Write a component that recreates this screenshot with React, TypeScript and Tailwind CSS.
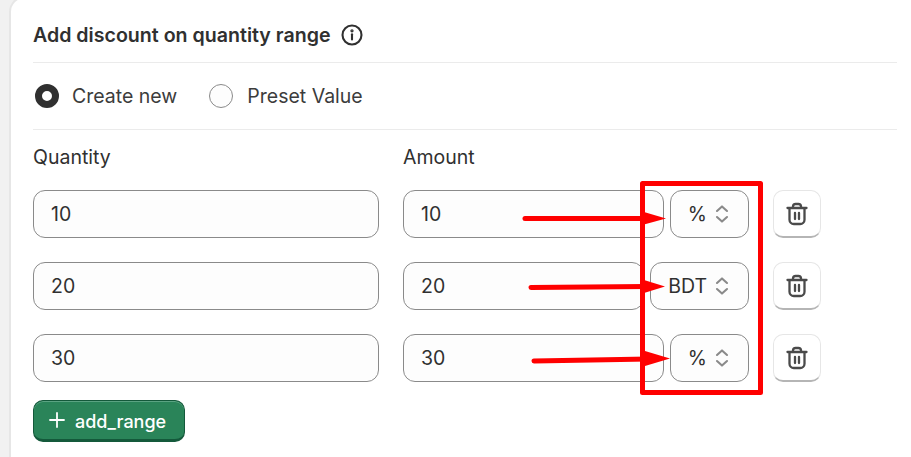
import React from "react";

function Chevrons() {
  return (
    <svg width="14" height="20" viewBox="0 0 14 20" fill="none" stroke="#8a8a8a" strokeWidth="2.100" strokeLinecap="round" strokeLinejoin="round" className="shrink-0">
      <path d="M2 7 7 2.400 12 7" />
      <path d="M2 13 7 17.600 12 13" />
    </svg>
  );
}

function Trash() {
  return (
    <svg width="22" height="24" viewBox="0 0 22 24" fill="none" stroke="#4a4a4a" strokeWidth="2.300" strokeLinecap="round" strokeLinejoin="round">
      <path d="M1.500 6h19" />
      <path d="M7 5.500V4.200A2.600 2.600 0 0 1 9.600 2h2.800A2.600 2.600 0 0 1 15 4.200v1.300" />
      <path d="M3.500 6.500v11.200A4.300 4.300 0 0 0 7.800 22h6.400a4.300 4.300 0 0 0 4.300-4.300V6.500" />
      <path d="M9 11v6" />
      <path d="M13 11v6" />
    </svg>
  );
}

const rows = [
  { q: "10", a: "10", unit: "%", aw: "w-[261px]", sw: "w-[79px]" },
  { q: "20", a: "20", unit: "BDT", aw: "w-[241px]", sw: "w-[99px]" },
  { q: "30", a: "30", unit: "%", aw: "w-[261px]", sw: "w-[79px]" },
];

export default function App() {
  return (
    <div className="relative h-[457px] w-[911px] overflow-hidden bg-[#f1f1f1] pl-[9px] font-['Inter',sans-serif] text-[#303030]">
      <div className="-mt-1 h-[480px] rounded-tl-[16px] rounded-bl-[16px] border-l-2 border-t-2 border-[#e6e6e6] bg-white pl-[22px] pr-[14px] pt-[2px]">
        <div className="flex h-[63px] items-center gap-[11px] border-b border-[#ebebeb] pt-[7px]">
          <h2 className="pt-[2px] text-[19.6px] font-semibold">Add discount on quantity range</h2>
          <svg width="22" height="22" viewBox="0 0 22 22" fill="none" stroke="#303030" strokeWidth="2.100" strokeLinecap="round" className="-translate-x-px">
            <circle cx="11" cy="11" r="9.500" />
            <path d="M11 10.200v5.300" />
            <circle cx="11" cy="6.800" r="0.600" fill="#303030" />
          </svg>
        </div>

        <div className="flex h-[67px] items-center border-b border-[#ebebeb] text-[19.5px] text-[#3c3c3c]">
          <span className="ml-[2px] h-6 w-6 rounded-full border-[7.5px] border-[#303030] bg-white" />
          <span className="ml-[13px] pt-[2px]">Create new</span>
          <span className="ml-[32px] h-6 w-6 rounded-full border border-[#8a8a8a] bg-[#fdfdfd]" />
          <span className="ml-[14px] pt-[2px]">Preset Value</span>
        </div>

        <div className="mt-[15px] flex h-[24px] items-center text-[19.5px] leading-6">
          <span className="w-[370px]">Quantity</span>
          <span>Amount</span>
        </div>

        <div className="mt-[21px] flex flex-col gap-6">
          {rows.map((r) => (
            <div key={r.q} className="flex h-12 text-[19.5px]">
              <div className="flex h-12 w-[346px] items-center rounded-[12px] border border-[#8a8a8a] bg-[#fdfdfd] pl-[17px] pt-[2px]">{r.q}</div>
              <div className={`ml-6 flex h-12 items-center rounded-[12px] border border-[#8a8a8a] bg-[#fdfdfd] pl-[17px] pt-[2px] ${r.aw}`}>{r.a}</div>
              <div className={`ml-[6px] flex h-12 items-center justify-end gap-2 rounded-[12px] border border-[#8a8a8a] bg-[#fdfdfd] pr-[19px] ${r.sw}`}>
                <span className="pt-[2px]">{r.unit}</span>
                <Chevrons />
              </div>
              <button className="ml-6 flex h-12 w-12 items-center justify-center rounded-[10px] border border-[#e6e6e6] border-b-2 border-b-[#b5b5b5] bg-white">
                <Trash />
              </button>
            </div>
          ))}
        </div>

        <button className="mt-[18px] flex h-[42px] w-[152px] items-center gap-[10px] rounded-[10px] border border-[#14593b] border-b-[3px] bg-[#2a8459] pl-[15px] text-[18px] font-medium text-white shadow-[inset_0_1px_0_#5aa382]">
          <svg width="16" height="16" viewBox="0 0 16 16" fill="none" stroke="#fff" strokeWidth="1.800" strokeLinecap="round">
            <path d="M8 1v14M1 8h14" />
          </svg>
          <span className="pt-[2px]">add_range</span>
        </button>
      </div>

      <svg className="absolute left-0 top-0" width="911" height="457" viewBox="0 0 911 457" fill="none">
        <rect x="642.500" y="183.500" width="118" height="209" stroke="#ff0000" strokeWidth="5" strokeLinejoin="round" />
        <path d="M525 218.500H650" stroke="#ff0000" strokeWidth="5" strokeLinecap="round" />
        <path d="M644 212l22 6.500-22 6z" fill="#ff0000" />
        <path d="M531 287.500l115-1" stroke="#ff0000" strokeWidth="5" strokeLinecap="round" />
        <path d="M644 280l21 6.500-21 6.500z" fill="#ff0000" />
        <path d="M534 361l115-2" stroke="#ff0000" strokeWidth="5" strokeLinecap="round" />
        <path d="M645 351l25 7.500-25 7.500z" fill="#ff0000" />
      </svg>
    </div>
  );
}
